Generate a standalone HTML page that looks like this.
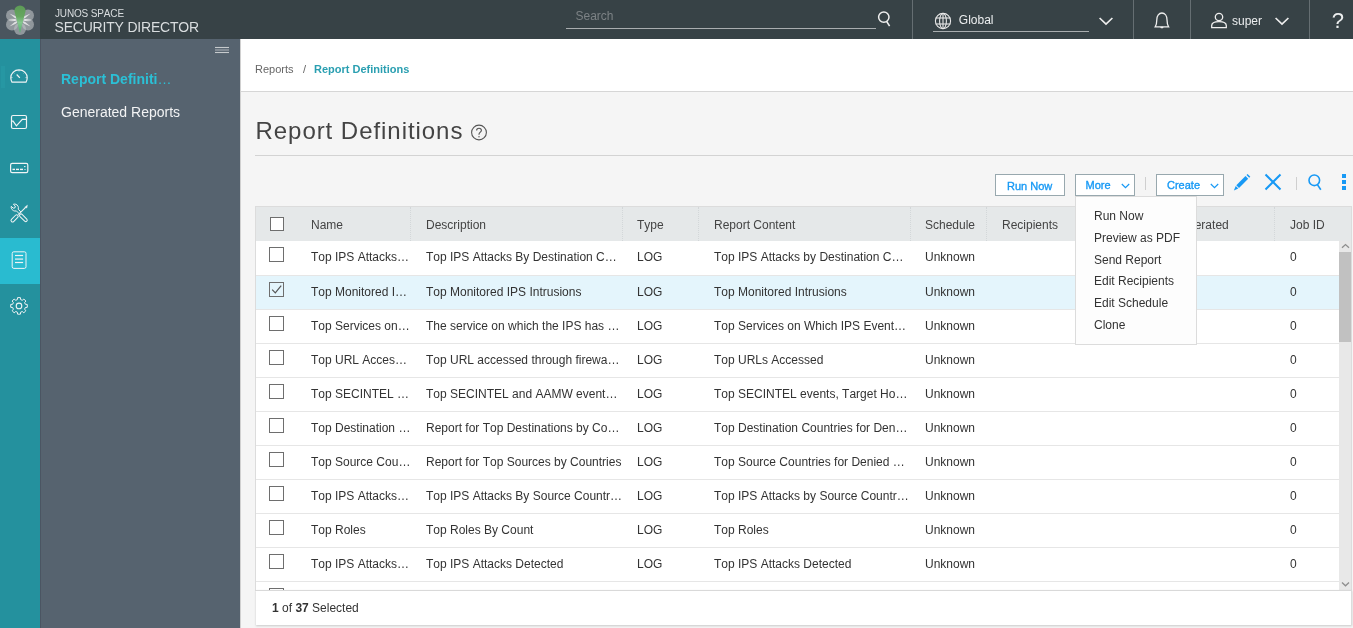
<!DOCTYPE html>
<html><head><meta charset="utf-8">
<style>
*{box-sizing:border-box;margin:0;padding:0}
html,body{width:1353px;height:628px;overflow:hidden;background:#f5f5f5;-webkit-font-smoothing:antialiased;will-change:transform;font-kerning:none;font-family:"Liberation Sans",sans-serif;color:#333}
.abs{position:absolute}
#hdr{position:absolute;left:0;top:0;width:1353px;height:39px;background:#374246}
#logo{position:absolute;left:0;top:0;width:40px;height:39px;background:#4a555e}
.brand1{position:absolute;left:55px;top:7.5px;font-size:10px;color:#d9dddf;letter-spacing:-0.15px;line-height:12px}
.brand2{position:absolute;left:54.5px;top:19px;font-size:14px;color:#d9dddf;letter-spacing:-0.2px;line-height:17px}
.sep{position:absolute;top:0;width:1px;height:39px;background:#656e72}
#rail{position:absolute;left:0;top:39px;width:40px;height:589px;background:#24919e}
#side{position:absolute;left:40px;top:39px;width:200px;height:589px;background:#56636f}
#crumb{position:absolute;left:240px;top:39px;width:1113px;height:53px;background:#fff;border-bottom:1px solid #d6d6d6;border-left:1px solid #d0d0d0}
#main{position:absolute;left:240px;top:92px;width:1113px;height:536px;border-left:1px solid #d0d0d0}
.t12{font-size:12px;line-height:14px;white-space:nowrap}
.btn{position:absolute;top:174px;height:22px;border:1px solid #98a8ae;background:#fff;color:#1799f5;font-size:11px;line-height:23px;white-space:nowrap;-webkit-text-stroke:0.35px #1799f5}
#tbl{position:absolute;left:255px;top:206px;width:1097px;height:385px;background:#fff;border-left:1px solid #dcdcdc;border-top:1px solid #dcdcdc}
#thead{position:absolute;left:256px;top:207px;width:1095px;height:34px;background:#e5e8e9}
.th{position:absolute;top:218px;font-size:12px;line-height:14px;color:#444;white-space:nowrap}
.vsep{position:absolute;top:207px;height:34px;width:0;border-left:1px dotted #d3d7d9}
.row{position:absolute;left:256px;width:1083px;height:34px;border-bottom:1px solid #e6e6e6;background:#fff}
.cb{position:absolute;left:269px;width:15px;height:15px;border:1px solid #6e6e6e;background:#fff}
.cell{position:absolute;font-size:12px;line-height:14px;color:#333;white-space:nowrap}
#footer{position:absolute;left:256px;top:590px;width:1096px;height:35px;background:#fff;border-top:1px solid #d9d9d9;border-right:1px solid #dcdcdc;box-shadow:0 1px 2px rgba(0,0,0,0.18)}
#menu{position:absolute;left:1075px;top:196px;width:122px;height:149px;background:#fdfdfd;border:1px solid #dcdcdc}
.mi{position:absolute;left:18px;font-size:12px;line-height:14px;color:#333;white-space:nowrap}
</style></head><body>

<!-- header -->
<div id="hdr"></div>
<div id="logo">
<svg width="40" height="39" viewBox="0 0 40 39">
 <defs><linearGradient id="lg" x1="0" y1="0" x2="0" y2="1"><stop offset="0" stop-color="#5d9a56"/><stop offset="0.4" stop-color="#66a760"/><stop offset="0.62" stop-color="#84c68e"/><stop offset="1" stop-color="#4ab169"/></linearGradient></defs>
 <g fill="#bfc3c6" fill-opacity="0.6">
  <circle cx="12" cy="15.5" r="6"/><circle cx="28" cy="15.5" r="6"/>
  <circle cx="12" cy="24.5" r="6"/><circle cx="28" cy="24.5" r="6"/>
  <circle cx="20" cy="29" r="6"/>
 </g>
 <g fill="#f2f3f3" fill-opacity="0.8"><path d="M20.0 20.0 L15.80 16.22 L9.50 13.50 L14.75 17.93 Z"/><path d="M20.0 20.0 L25.25 17.93 L30.50 13.50 L24.20 16.22 Z"/><path d="M20.0 20.0 L14.82 19.00 L8.50 20.00 L14.82 21.00 Z"/><path d="M20.0 20.0 L25.18 21.00 L31.50 20.00 L25.18 19.00 Z"/><path d="M20.0 20.0 L14.75 22.07 L9.50 26.50 L15.80 23.78 Z"/><path d="M20.0 20.0 L24.20 23.78 L30.50 26.50 L25.25 22.07 Z"/></g>
 <path d="M14.4 11 A5.6 5.6 0 0 1 25.6 11 L20 33 Z" fill="url(#lg)"/>
</svg>
</div>
<div class="brand1">JUNOS SPACE</div>
<div class="brand2">SECURITY DIRECTOR</div>

<div class="abs t12" style="left:575.5px;top:9px;color:#7c8285">Search</div>
<div class="abs" style="left:566px;top:28px;width:310px;height:1px;background:#a9adaf"></div>
<svg class="abs" style="left:876px;top:9px" width="18" height="20" viewBox="0 0 18 20"><circle cx="7.8" cy="8.1" r="5.2" fill="none" stroke="#eee" stroke-width="1.5"/><line x1="10.6" y1="12.4" x2="13.6" y2="17.2" stroke="#eee" stroke-width="1.6"/></svg>
<div class="sep" style="left:912px"></div>
<svg class="abs" style="left:934px;top:12px" width="18" height="18" viewBox="0 0 18 18" fill="none" stroke="#e8e8e8" stroke-width="1.1"><circle cx="9" cy="9" r="7.6"/><ellipse cx="9" cy="9" rx="3.4" ry="7.6"/><line x1="9" y1="1.4" x2="9" y2="16.6"/><line x1="1.6" y1="6" x2="16.4" y2="6"/><line x1="1.6" y1="12" x2="16.4" y2="12"/></svg>
<div class="abs t12" style="left:958.8px;top:13px;color:#eceeef">Global</div>
<div class="abs" style="left:933px;top:31px;width:156px;height:1px;background:#a9adaf"></div>
<svg class="abs" style="left:1098px;top:16px" width="16" height="10" viewBox="0 0 16 10"><polyline points="1.6,2 8,8 14.4,2" fill="none" stroke="#eee" stroke-width="1.7"/></svg>
<div class="sep" style="left:1133px"></div>
<svg class="abs" style="left:1153px;top:11px" width="18" height="18" viewBox="0 0 18 18" fill="none" stroke="#eee" stroke-width="1.3"><path d="M2.2 15.9 L15.6 15.9 C14.5 14 14 13 14 8.8 C14 4.6 11.8 2 8.9 2 C6 2 3.8 4.6 3.8 8.8 C3.8 13 3.3 14 2.2 15.9 Z"/><path d="M7.6 16.1 Q8.9 17 10.2 16.1"/></svg>
<div class="sep" style="left:1190px"></div>
<svg class="abs" style="left:1210px;top:12px" width="18" height="18" viewBox="0 0 18 18" fill="none" stroke="#eee" stroke-width="1.3"><circle cx="9" cy="5" r="3.7"/><path d="M1.7 15.6 L16.3 15.6 L16.3 13.6 C16.3 11.3 13.4 9.6 9 9.6 C4.6 9.6 1.7 11.3 1.7 13.6 Z"/></svg>
<div class="abs t12" style="left:1232px;top:14px;color:#eceeef">super</div>
<svg class="abs" style="left:1274px;top:16px" width="16" height="10" viewBox="0 0 16 10"><polyline points="1.6,2 8,8 14.4,2" fill="none" stroke="#eee" stroke-width="1.7"/></svg>
<div class="sep" style="left:1309px"></div>
<div class="abs" style="left:1331.7px;top:8.7px;font-size:22px;line-height:24px;color:#eceeef">?</div>

<!-- left rail -->
<div id="rail"></div>
<div class="abs" style="left:0;top:238px;width:40px;height:46px;background:#29bbd0"></div>
<div class="abs" style="left:1px;top:66px;width:4px;height:22px;background:#2697a3"></div>
<svg class="abs" style="left:0;top:39px" width="40" height="300" viewBox="0 39 40 300" fill="none" stroke="#f0f4f5" stroke-width="1.2">
 <!-- gauge -->
 <path d="M12 82.2 C11 80.6 10.8 79.2 10.8 77.8 C10.8 73.2 14.5 69.8 19 69.8 C23.5 69.8 27.2 73.2 27.2 77.8 C27.2 79.2 27 80.6 26 82.2 Z"/>
 <line x1="16.7" y1="74.5" x2="19.8" y2="77.9" stroke-width="1.2"/>
 <g stroke-width="0.9" stroke-opacity="0.8"><line x1="19" y1="70" x2="19" y2="71.4"/><line x1="13.3" y1="72.4" x2="14.3" y2="73.3"/><line x1="24.7" y1="72.4" x2="23.7" y2="73.3"/><line x1="11.2" y1="77.6" x2="12.5" y2="77.6"/><line x1="26.8" y1="77.6" x2="25.5" y2="77.6"/></g>
 <!-- chart box -->
 <rect x="11.5" y="115.5" width="15" height="13" rx="1.5"/>
 <polyline points="11.2,121.2 13.1,121.2 16.4,125.9 22.3,119.3 26.8,119.3"/>
 <!-- card -->
 <rect x="10.6" y="163.3" width="17.2" height="9.4" rx="1.6"/>
 <line x1="12.5" y1="169.4" x2="15" y2="169.4" stroke-width="1.4"/>
 <line x1="16" y1="169.4" x2="19" y2="169.4" stroke-width="1.4"/>
 <line x1="20" y1="169.4" x2="23" y2="169.4" stroke-width="1.4"/>
 <line x1="24" y1="166.6" x2="25.5" y2="166.6" stroke-width="1"/>
 <line x1="24.5" y1="169.5" x2="25.5" y2="169.5" stroke-width="1"/>
 <!-- tools -->
 <rect x="-4.4" y="-1.55" width="8.8" height="3.1" rx="1.5" transform="translate(14.6 218.4) rotate(-45)" stroke-width="1"/>
 <line x1="18.3" y1="214.6" x2="25.6" y2="207.4" stroke-width="1.1"/>
 <path d="M24.8 207.2 L27.4 205.2 L26.8 208 Z" fill="#f0f4f5" stroke-width="0.5"/>
 <rect x="-4.8" y="-1.5" width="9.6" height="3" rx="1.5" transform="translate(23.4 217.8) rotate(45)" stroke-width="1"/>
 <path d="M19.3 213.8 L16.4 210.9 C14.4 211.6 12 210.3 11.3 208.2 C11 207.4 11.1 206.7 11.3 206.3 L13.2 208.2 L15 207.8 L15.3 206.1 L13.4 204.3 C14.1 204 15 204 15.9 204.3 C17.8 205 18.9 207.1 18.2 209.2 L20.9 212" stroke-width="1"/>
 <!-- doc -->
 <rect x="12.2" y="251.8" width="13.8" height="16.6" rx="1.6" stroke-width="1"/>
 <line x1="15" y1="255.5" x2="23.1" y2="255.5"/>
 <line x1="15" y1="259.1" x2="23.1" y2="259.1"/>
 <line x1="15" y1="262.5" x2="23.1" y2="262.5"/>
 <!-- gear -->
 <path d="M17.33 299.62 L17.58 297.62 L20.42 297.62 L20.67 299.62 L22.26 300.28 L23.85 299.04 L25.86 301.05 L24.62 302.64 L25.28 304.23 L27.28 304.48 L27.28 307.32 L25.28 307.57 L24.62 309.16 L25.86 310.75 L23.85 312.76 L22.26 311.52 L20.67 312.18 L20.42 314.18 L17.58 314.18 L17.33 312.18 L15.74 311.52 L14.15 312.76 L12.14 310.75 L13.38 309.16 L12.72 307.57 L10.72 307.32 L10.72 304.48 L12.72 304.23 L13.38 302.64 L12.14 301.05 L14.15 299.04 L15.74 300.28 Z" stroke-width="1" stroke-linejoin="round"/>
 <circle cx="19" cy="305.9" r="2.8" stroke-width="1.1"/>
</svg>

<!-- sidebar -->
<div id="side"></div>
<div class="abs" style="left:40px;top:39px;width:1px;height:589px;background:#4b5562"></div>
<svg class="abs" style="left:215px;top:46px" width="14" height="8" viewBox="0 0 14 8" stroke="#c6cacd" stroke-width="1.1"><line x1="0" y1="1.5" x2="14" y2="1.5"/><line x1="0" y1="4" x2="14" y2="4" stroke="#aab0b5"/><line x1="0" y1="6.5" x2="14" y2="6.5"/></svg>
<div class="abs" style="left:61px;top:71px;font-size:14px;line-height:16px;font-weight:bold;color:#2bc0d6;white-space:nowrap">Report Definiti<span style="font-weight:normal">…</span></div>
<div class="abs" style="left:61px;top:104px;font-size:14px;line-height:16px;color:#f2f3f4;white-space:nowrap">Generated Reports</div>

<!-- breadcrumb -->
<div id="crumb"></div>
<div class="abs" style="left:255px;top:63px;font-size:11px;line-height:13px;color:#666;white-space:nowrap">Reports</div>
<div class="abs" style="left:303px;top:63px;font-size:11px;line-height:13px;color:#666">/</div>
<div class="abs" style="left:314px;top:63px;font-size:11px;line-height:13px;color:#2a9fb1;font-weight:bold;white-space:nowrap">Report Definitions</div>

<div id="main"></div>
<div class="abs" style="left:255.5px;top:116.1px;font-size:24px;line-height:30px;letter-spacing:0.95px;color:#444;white-space:nowrap">Report Definitions</div>
<svg class="abs" style="left:470px;top:124px" width="18" height="18" viewBox="0 0 18 18" fill="none" stroke="#555" stroke-width="1.1"><circle cx="9" cy="8.5" r="7.4"/><path d="M6.6 6.6 C6.6 5.1 7.6 4.3 9 4.3 C10.4 4.3 11.4 5.1 11.4 6.4 C11.4 8 9 8.3 9 10.3 L9 10.8"/><circle cx="9" cy="12.8" r="0.7" fill="#555" stroke="none"/></svg>
<div class="abs" style="left:255px;top:155px;width:1098px;height:1px;background:#d3d3d3"></div>

<!-- toolbar -->
<div class="btn" style="left:995px;width:70px;padding-left:11px">Run Now</div>
<div class="btn" style="left:1075px;width:60px;padding-left:9.5px;line-height:21px">More<svg class="abs" style="left:44.5px;top:8px" width="9" height="6" viewBox="0 0 9 6"><polyline points="0.8,1 4.5,4.6 8.2,1" fill="none" stroke="#1799f5" stroke-width="1.2"/></svg></div>
<div class="abs" style="left:1145px;top:177px;width:1px;height:13px;background:#cfcfcf"></div>
<div class="btn" style="left:1156px;width:68px;padding-left:10px;line-height:21px">Create<svg class="abs" style="left:53px;top:8px" width="9" height="6" viewBox="0 0 9 6"><polyline points="0.8,1 4.5,4.6 8.2,1" fill="none" stroke="#1799f5" stroke-width="1.2"/></svg></div>
<svg class="abs" style="left:1233px;top:173px" width="18" height="18" viewBox="0 0 18 18"><path d="M3.3 12.3 L12.5 3.1 L15.2 5.8 L6 15 Z" fill="#1799f5"/><path d="M13.5 2.1 L14.6 1 L17.3 3.7 L16.2 4.8 Z" fill="#1799f5"/><path d="M2.7 13 L5.3 15.6 L0.9 17.4 Z" fill="#1799f5"/></svg>
<svg class="abs" style="left:1264px;top:173px" width="18" height="18" viewBox="0 0 18 18"><path d="M1.5 1.5 L16.5 16.5 M16.5 1.5 L1.5 16.5" stroke="#1799f5" stroke-width="2"/></svg>
<div class="abs" style="left:1296px;top:177px;width:1px;height:13px;background:#cfcfcf"></div>
<svg class="abs" style="left:1307px;top:174px" width="16" height="17" viewBox="0 0 16 17" fill="none" stroke="#1799f5" stroke-width="1.6"><circle cx="7.3" cy="6.3" r="5.3"/><line x1="10.4" y1="10.6" x2="13.8" y2="15.8"/></svg>
<div class="abs" style="left:1342px;top:174px;width:4px;height:4px;background:#1799f5"></div>
<div class="abs" style="left:1342px;top:180px;width:4px;height:4px;background:#1799f5"></div>
<div class="abs" style="left:1342px;top:186px;width:4px;height:4px;background:#1799f5"></div>

<!-- table -->
<div id="tbl"></div>
<div id="thead"></div>
<div class="cb" style="top:217px;left:270px;width:14px;height:14px"></div>
<div class="th" style="left:311px">Name</div>
<div class="vsep" style="left:410px"></div>
<div class="th" style="left:426px">Description</div>
<div class="vsep" style="left:622px"></div>
<div class="th" style="left:637px">Type</div>
<div class="vsep" style="left:698px"></div>
<div class="th" style="left:714px">Report Content</div>
<div class="vsep" style="left:910px"></div>
<div class="th" style="left:925px">Schedule</div>
<div class="vsep" style="left:986px"></div>
<div class="th" style="left:1002px">Recipients</div>
<div class="vsep" style="left:1130px"></div>
<div class="th" style="left:1146px">Last Generated</div>
<div class="vsep" style="left:1274px"></div>
<div class="th" style="left:1290px">Job ID</div>

<!--ROWS-->
<div class="row" style="top:241px;height:35px;background:#fff"></div>
<div class="cb" style="top:247px;background:#fff"></div>
<div class="cell" style="left:311px;top:250px">Top IPS Attacks…</div>
<div class="cell" style="left:426px;top:250px">Top IPS Attacks By Destination C…</div>
<div class="cell" style="left:637px;top:250px">LOG</div>
<div class="cell" style="left:714px;top:250px">Top IPS Attacks by Destination C…</div>
<div class="cell" style="left:925px;top:250px">Unknown</div>
<div class="cell" style="left:1290px;top:250px">0</div>
<div class="row" style="top:276px;height:34px;background:#e4f5fc"></div>
<div class="cb" style="top:282px;background:#e4f5fc"><svg class="abs" style="left:1px;top:1px" width="11" height="11" viewBox="0 0 11 11"><polyline points="1.2,5.6 4.3,8.8 10.2,1.6" fill="none" stroke="#555" stroke-width="1.2"/></svg></div>
<div class="cell" style="left:311px;top:285px">Top Monitored I…</div>
<div class="cell" style="left:426px;top:285px">Top Monitored IPS Intrusions</div>
<div class="cell" style="left:637px;top:285px">LOG</div>
<div class="cell" style="left:714px;top:285px">Top Monitored Intrusions</div>
<div class="cell" style="left:925px;top:285px">Unknown</div>
<div class="cell" style="left:1290px;top:285px">0</div>
<div class="row" style="top:310px;height:34px;background:#fff"></div>
<div class="cb" style="top:316px;background:#fff"></div>
<div class="cell" style="left:311px;top:319px">Top Services on…</div>
<div class="cell" style="left:426px;top:319px">The service on which the IPS has …</div>
<div class="cell" style="left:637px;top:319px">LOG</div>
<div class="cell" style="left:714px;top:319px">Top Services on Which IPS Event…</div>
<div class="cell" style="left:925px;top:319px">Unknown</div>
<div class="cell" style="left:1290px;top:319px">0</div>
<div class="row" style="top:344px;height:34px;background:#fff"></div>
<div class="cb" style="top:350px;background:#fff"></div>
<div class="cell" style="left:311px;top:353px">Top URL Acces…</div>
<div class="cell" style="left:426px;top:353px">Top URL accessed through firewa…</div>
<div class="cell" style="left:637px;top:353px">LOG</div>
<div class="cell" style="left:714px;top:353px">Top URLs Accessed</div>
<div class="cell" style="left:925px;top:353px">Unknown</div>
<div class="cell" style="left:1290px;top:353px">0</div>
<div class="row" style="top:378px;height:34px;background:#fff"></div>
<div class="cb" style="top:384px;background:#fff"></div>
<div class="cell" style="left:311px;top:387px">Top SECINTEL …</div>
<div class="cell" style="left:426px;top:387px">Top SECINTEL and AAMW event…</div>
<div class="cell" style="left:637px;top:387px">LOG</div>
<div class="cell" style="left:714px;top:387px">Top SECINTEL events, Target Ho…</div>
<div class="cell" style="left:925px;top:387px">Unknown</div>
<div class="cell" style="left:1290px;top:387px">0</div>
<div class="row" style="top:412px;height:34px;background:#fff"></div>
<div class="cb" style="top:418px;background:#fff"></div>
<div class="cell" style="left:311px;top:421px">Top Destination …</div>
<div class="cell" style="left:426px;top:421px">Report for Top Destinations by Co…</div>
<div class="cell" style="left:637px;top:421px">LOG</div>
<div class="cell" style="left:714px;top:421px">Top Destination Countries for Den…</div>
<div class="cell" style="left:925px;top:421px">Unknown</div>
<div class="cell" style="left:1290px;top:421px">0</div>
<div class="row" style="top:446px;height:34px;background:#fff"></div>
<div class="cb" style="top:452px;background:#fff"></div>
<div class="cell" style="left:311px;top:455px">Top Source Cou…</div>
<div class="cell" style="left:426px;top:455px">Report for Top Sources by Countries</div>
<div class="cell" style="left:637px;top:455px">LOG</div>
<div class="cell" style="left:714px;top:455px">Top Source Countries for Denied …</div>
<div class="cell" style="left:925px;top:455px">Unknown</div>
<div class="cell" style="left:1290px;top:455px">0</div>
<div class="row" style="top:480px;height:34px;background:#fff"></div>
<div class="cb" style="top:486px;background:#fff"></div>
<div class="cell" style="left:311px;top:489px">Top IPS Attacks…</div>
<div class="cell" style="left:426px;top:489px">Top IPS Attacks By Source Countr…</div>
<div class="cell" style="left:637px;top:489px">LOG</div>
<div class="cell" style="left:714px;top:489px">Top IPS Attacks by Source Countr…</div>
<div class="cell" style="left:925px;top:489px">Unknown</div>
<div class="cell" style="left:1290px;top:489px">0</div>
<div class="row" style="top:514px;height:34px;background:#fff"></div>
<div class="cb" style="top:520px;background:#fff"></div>
<div class="cell" style="left:311px;top:523px">Top Roles</div>
<div class="cell" style="left:426px;top:523px">Top Roles By Count</div>
<div class="cell" style="left:637px;top:523px">LOG</div>
<div class="cell" style="left:714px;top:523px">Top Roles</div>
<div class="cell" style="left:925px;top:523px">Unknown</div>
<div class="cell" style="left:1290px;top:523px">0</div>
<div class="row" style="top:548px;height:34px;background:#fff"></div>
<div class="cb" style="top:554px;background:#fff"></div>
<div class="cell" style="left:311px;top:557px">Top IPS Attacks…</div>
<div class="cell" style="left:426px;top:557px">Top IPS Attacks Detected</div>
<div class="cell" style="left:637px;top:557px">LOG</div>
<div class="cell" style="left:714px;top:557px">Top IPS Attacks Detected</div>
<div class="cell" style="left:925px;top:557px">Unknown</div>
<div class="cell" style="left:1290px;top:557px">0</div>
<div class="row" style="top:582px;height:9px;border-bottom:none"></div>
<div class="cb" style="top:588px;height:3px;border-bottom:none"></div>
<!--/ROWS-->

<!-- scrollbar -->
<div class="abs" style="left:1339px;top:241px;width:12px;height:349px;background:#e8e8e8"></div>
<div class="abs" style="left:1339px;top:252px;width:12px;height:90px;background:#c1c1c1"></div>
<div class="abs" style="left:1351px;top:206px;width:1px;height:384px;background:#dcdcdc"></div>
<svg class="abs" style="left:1340px;top:242px" width="11" height="8" viewBox="0 0 11 8"><polyline points="2,5.8 5.5,2.6 9,5.8" fill="none" stroke="#8e8e8e" stroke-width="1.3"/></svg>
<svg class="abs" style="left:1340px;top:580px" width="11" height="8" viewBox="0 0 11 8"><polyline points="2,2.6 5.5,5.8 9,2.6" fill="none" stroke="#8e8e8e" stroke-width="1.3"/></svg>

<div id="footer"></div>
<div class="abs t12" style="left:272px;top:601px;color:#333"><b>1</b> of <b>37</b> Selected</div>

<!-- dropdown menu -->
<div id="menu">
 <div class="mi" style="top:12px">Run Now</div>
 <div class="mi" style="top:34px">Preview as PDF</div>
 <div class="mi" style="top:56px">Send Report</div>
 <div class="mi" style="top:77px">Edit Recipients</div>
 <div class="mi" style="top:99px">Edit Schedule</div>
 <div class="mi" style="top:121px">Clone</div>
</div>

</body></html>
